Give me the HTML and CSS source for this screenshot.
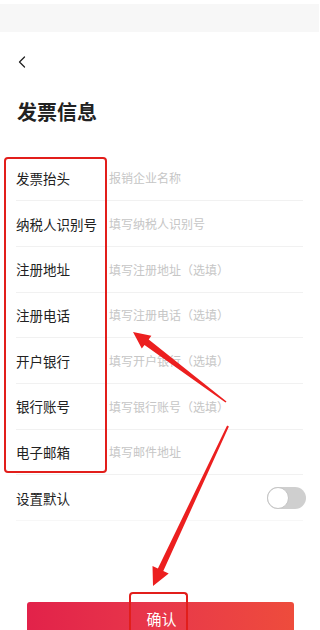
FILE: index.html
```html
<!DOCTYPE html>
<html lang="zh-CN">
<head>
<meta charset="utf-8">
<title>发票信息</title>
<link rel="stylesheet" href="styles.css">
</head>
<body>
<div class="page">
  <div class="statusbar"></div>
  <div class="nav">
    <svg class="back" viewBox="0 0 8 12" width="8" height="12"><path d="M6.5 1 L1.5 6 L6.5 11" fill="none" stroke="#222" stroke-width="1.3" stroke-linecap="round" stroke-linejoin="round"/></svg>
  </div>
  <h1 class="title">发票信息</h1>
  <div class="form">
    <div class="row"><span class="label">发票抬头</span><span class="ph">报销企业名称</span></div>
    <div class="row"><span class="label">纳税人识别号</span><span class="ph">填写纳税人识别号</span></div>
    <div class="row"><span class="label">注册地址</span><span class="ph">填写注册地址（选填）</span></div>
    <div class="row"><span class="label">注册电话</span><span class="ph">填写注册电话（选填）</span></div>
    <div class="row"><span class="label">开户银行</span><span class="ph">填写开户银行（选填）</span></div>
    <div class="row"><span class="label">银行账号</span><span class="ph">填写银行账号（选填）</span></div>
    <div class="row"><span class="label">电子邮箱</span><span class="ph">填写邮件地址</span></div>
    <div class="row row-switch"><span class="label">设置默认</span><span class="switch"><span class="knob"></span></span></div>
  </div>
  <div class="btn-wrap">
    <div class="btn"><span class="btn-text">确认</span></div>
  </div>
  <div class="mark mark-labels"></div>
  <div class="mark mark-btn"></div>
  <svg class="arrows" viewBox="0 0 319 630" width="319" height="630">
    <polygon points="133,332 151.4,335.8 148.7,339.4 226.5,401.4 225.5,402.6 144.5,345 141.8,348.6" fill="#ec1f1f"/>
    <polygon points="153,586 168.7,573.5 163.3,571 228.9,426.4 227.1,425.6 157.9,568.4 152.5,565.9" fill="#ec1f1f"/>
  </svg>
</div>
</body>
</html>
```
FILE: styles.css
```css
* { box-sizing: border-box; }
html, body { margin: 0; padding: 0; background: #fff; }
body {
  font-family: "Noto Sans CJK SC", "Noto Sans", sans-serif;
  color: #222;
  overflow: hidden;
}
.page {
  position: relative;
  width: 319px;
  height: 630px;
  overflow: hidden;
}
.statusbar {
  margin-top: 4px;
  height: 28px;
  background: #f7f7f7;
}
.nav {
  height: 24px;
  margin-top: 18px;
  padding-left: 18px;
  display: flex;
  align-items: center;
}
.back { display: block; }
.title {
  margin: 0;
  margin-top: 24px;
  padding-left: 17px;
  font-size: 20px;
  font-weight: 700;
  line-height: 28px;
  height: 28px;
}
.form {
  margin-top: 29.5px;
  padding: 0 16px;
}
.row {
  height: 45.7px;
  display: flex;
  align-items: center;
  border-bottom: 1px solid #f1f1f1;
}
.row-switch { border-bottom-color: #f7f7f7; }
.label {
  width: 93px;
  flex: none;
  font-size: 13.5px;
  color: #222;
}
.ph {
  font-size: 12px;
  color: #c6c6c6;
}
.switch {
  margin-left: auto;
  margin-right: -3px;
  width: 39px;
  height: 22px;
  border-radius: 11px;
  background: #cfcfcf;
  position: relative;
}
.knob {
  position: absolute;
  left: 0;
  top: 0;
  width: 22px;
  height: 22px;
  border-radius: 50%;
  background: #fff;
  border: 1px solid #c4c4c4;
}
.btn-wrap {
  margin-top: 80.9px;
  padding: 0 25px 0 27px;
}
.btn {
  height: 28px;
  border-radius: 3px 3px 0 0;
  background: linear-gradient(90deg, #e2224a 0%, #e8384a 50%, #ee4c3c 100%);
  color: #fff;
  display: flex;
  align-items: flex-start;
  justify-content: center;
  padding-top: 9px;
  padding-left: 2px;
}
.btn-text {
  font-size: 15px;
  line-height: 16px;
}
.mark {
  position: absolute;
  border: 2.5px solid #e21e1b;
  border-radius: 4px;
}
.mark-labels {
  left: 4px;
  top: 157px;
  width: 103px;
  height: 316px;
}
.mark-btn {
  left: 129px;
  top: 592px;
  width: 59px;
  height: 38px;
  border-bottom: 0;
  border-radius: 4px 4px 0 0;
}
.arrows {
  position: absolute;
  left: 0;
  top: 0;
  pointer-events: none;
}
```
